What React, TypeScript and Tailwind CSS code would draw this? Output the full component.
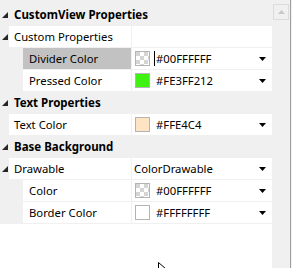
import type { ReactNode } from "react";

type Swatch = "checker" | string;

function Expander() {
  return (
    <svg width="6" height="6" viewBox="0 0 6 6" className="block">
      <polygon points="6,0 6,6 0,6" fill="#262626" />
    </svg>
  );
}

function DropArrow() {
  return (
    <svg width="7" height="4" viewBox="0 0 7 4" className="block">
      <polygon points="0,0 7,0 3.5,4" fill="#000000" />
    </svg>
  );
}

function ColorBox({ swatch }: { swatch: Swatch }) {
  if (swatch === "checker") {
    return (
      <svg width="15" height="15" viewBox="0 0 15 15" className="block shrink-0">
        <rect x="0.5" y="0.5" width="14" height="14" fill="#ffffff" stroke="#b4b4b4" />
        <rect x="1" y="1" width="4" height="4" fill="#d4d4d4" />
        <rect x="9" y="1" width="4" height="4" fill="#d4d4d4" />
        <rect x="5" y="5" width="4" height="4" fill="#d4d4d4" />
        <rect x="13" y="5" width="1" height="4" fill="#d4d4d4" />
        <rect x="1" y="9" width="4" height="4" fill="#d4d4d4" />
        <rect x="9" y="9" width="4" height="4" fill="#d4d4d4" />
        <rect x="5" y="13" width="4" height="1" fill="#d4d4d4" />
      </svg>
    );
  }
  return (
    <div
      className="h-[15px] w-[15px] shrink-0 border border-[#b4b4b4]"
      style={{ backgroundColor: swatch }}
    />
  );
}

function Category({ label }: { label: string }) {
  return (
    <div className="flex h-[21px] items-center bg-[#f0f0f0]">
      <div className="flex w-[14px] shrink-0 pl-[2px]">
        <Expander />
      </div>
      <span className="whitespace-nowrap text-[11.5px] font-bold">{label}</span>
    </div>
  );
}

function Property({
  label,
  nested = false,
  expander = false,
  selected = false,
  children,
  dropdown = false,
}: {
  label: string;
  nested?: boolean;
  expander?: boolean;
  selected?: boolean;
  children?: ReactNode;
  dropdown?: boolean;
}) {
  return (
    <div className="flex h-[21px] bg-[#f0f0f0]">
      <div className={`flex shrink-0 items-center pl-[2px] ${nested ? "w-[23px]" : "w-[9px]"}`}>
        {expander && <Expander />}
      </div>
      <div
        className={`flex flex-1 items-center whitespace-nowrap ${nested ? "pl-[6px]" : "pl-[5px]"} ${selected ? "bg-[#c2c2c2]" : "bg-white"}`}
      >
        {label}
      </div>
      <div className="w-px shrink-0 bg-[#f0f0f0]" />
      <div className="flex w-[140px] shrink-0 items-center bg-white pl-[3px] pr-[6px]">
        <div className="flex flex-1 items-center">{children}</div>
        {dropdown && <DropArrow />}
      </div>
    </div>
  );
}

function ColorValue({ swatch, text, caret = false }: { swatch: Swatch; text: string; caret?: boolean }) {
  return (
    <>
      <ColorBox swatch={swatch} />
      <div className="ml-[4px] flex items-center">
        <div className={`h-[15px] w-px ${caret ? "bg-black" : "bg-transparent"}`} />
        <span className="ml-px">{text}</span>
      </div>
    </>
  );
}

export default function App() {
  return (
    <div
      className="relative flex h-[268px] w-[292px] overflow-hidden bg-[#f0f0f0] text-[11.3px] leading-none text-black"
      style={{ fontFamily: '"Segoe UI", "Noto Sans", sans-serif' }}
    >
      <div className="flex w-[272px] flex-col pt-[4px]">
        <div className="flex flex-col gap-px bg-[#f0f0f0] pb-px">
          <Category label="CustomView Properties" />
          <Property label="Custom Properties" expander />
          <Property label="Divider Color" nested selected dropdown>
            <ColorValue swatch="checker" text="#00FFFFFF" caret />
          </Property>
          <Property label="Pressed Color" nested dropdown>
            <ColorValue swatch="#3ff212" text="#FE3FF212" />
          </Property>
          <Category label="Text Properties" />
          <Property label="Text Color" dropdown>
            <ColorValue swatch="#ffe4c4" text="#FFE4C4" />
          </Property>
          <Category label="Base Background" />
          <Property label="Drawable" expander dropdown>
            <span className="ml-[-1px]">ColorDrawable</span>
          </Property>
          <Property label="Color" nested dropdown>
            <ColorValue swatch="checker" text="#00FFFFFF" />
          </Property>
          <Property label="Border Color" nested dropdown>
            <ColorValue swatch="#ffffff" text="#FFFFFFFF" />
          </Property>
        </div>
        <div className="flex-1 bg-white" />
      </div>
      <div className="flex w-[18px] flex-col pt-[4px] pl-px">
        <div className="flex h-[16px] w-[16px] items-center justify-center border border-[#dcdcdc] bg-[#f0f0f0]">
          <svg width="7" height="4" viewBox="0 0 7 4" className="block">
            <polygon points="0,4 7,4 3.5,0" fill="#c8c8c8" />
          </svg>
        </div>
      </div>
      <div className="w-px bg-[#a0a0a0]" />
      <div className="w-px bg-[#f0f0f0]" />
      <svg
        width="10"
        height="12"
        viewBox="0 0 10 12"
        className="absolute left-[158px] top-[262px]"
      >
        <polygon points="0.5,0.5 0.5,10 3,7.5 5,11.5 6.5,10.8 4.6,7 8,7" fill="#ffffff" stroke="#000000" strokeWidth="1" />
      </svg>
    </div>
  );
}
